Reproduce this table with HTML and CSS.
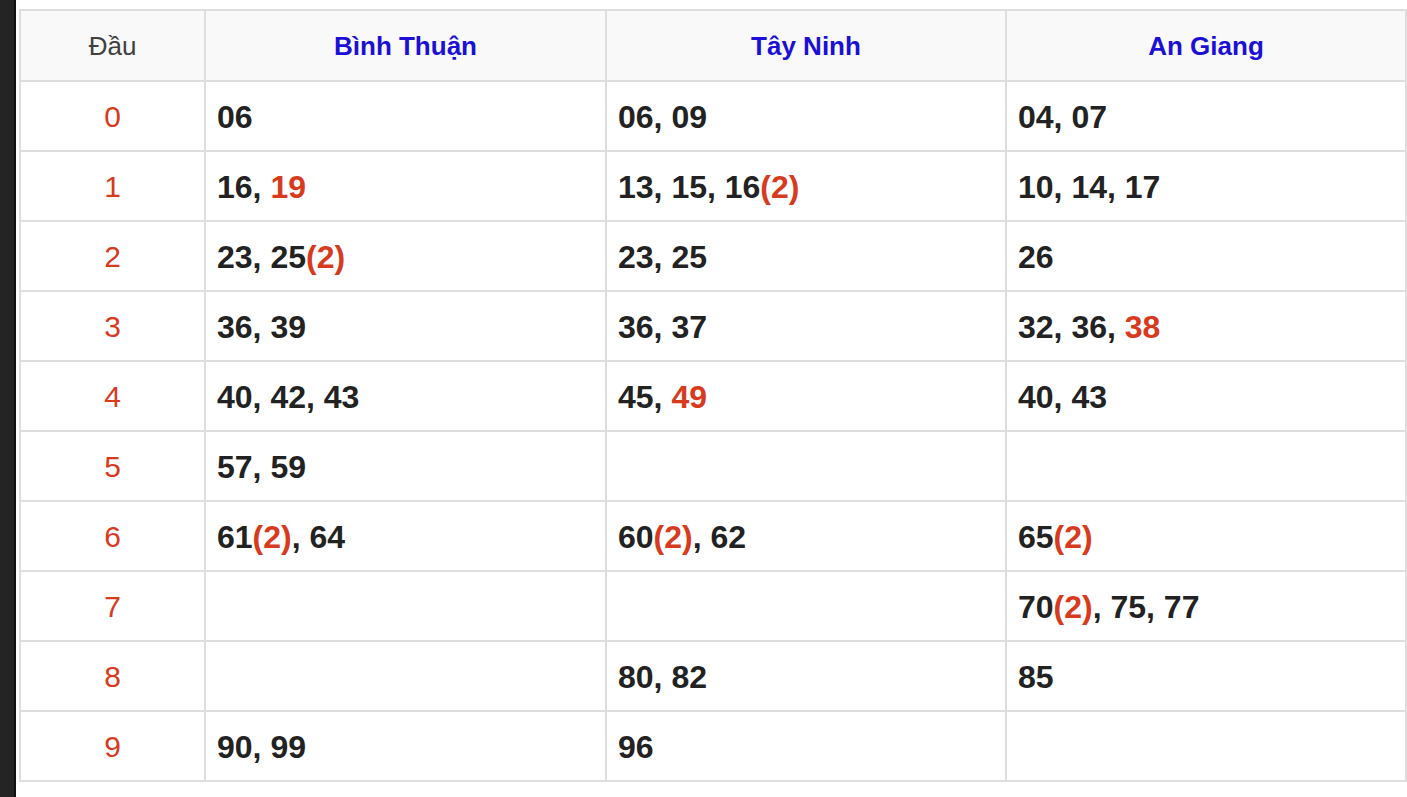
FILE: index.html
```html
<!DOCTYPE html>
<html lang="vi">
<head>
<meta charset="utf-8">
<title>Thống kê đầu</title>
<link rel="stylesheet" href="styles.css">
</head>
<body>
<div class="page">
  <aside class="side"></aside>
  <main class="main">
    <div class="grid">
      <div class="cell head"><span>Đầu</span></div>
      <div class="cell head prov"><span>Bình Thuận</span></div>
      <div class="cell head prov"><span>Tây Ninh</span></div>
      <div class="cell head prov"><span>An Giang</span></div>

      <div class="cell dau"><span>0</span></div>
      <div class="cell num"><span>06</span></div>
      <div class="cell num"><span>06, 09</span></div>
      <div class="cell num"><span>04, 07</span></div>

      <div class="cell dau"><span>1</span></div>
      <div class="cell num"><span>16, <span class="r">19</span></span></div>
      <div class="cell num"><span>13, 15, 16<span class="r">(2)</span></span></div>
      <div class="cell num"><span>10, 14, 17</span></div>

      <div class="cell dau"><span>2</span></div>
      <div class="cell num"><span>23, 25<span class="r">(2)</span></span></div>
      <div class="cell num"><span>23, 25</span></div>
      <div class="cell num"><span>26</span></div>

      <div class="cell dau"><span>3</span></div>
      <div class="cell num"><span>36, 39</span></div>
      <div class="cell num"><span>36, 37</span></div>
      <div class="cell num"><span>32, 36, <span class="r">38</span></span></div>

      <div class="cell dau"><span>4</span></div>
      <div class="cell num"><span>40, 42, 43</span></div>
      <div class="cell num"><span>45, <span class="r">49</span></span></div>
      <div class="cell num"><span>40, 43</span></div>

      <div class="cell dau"><span>5</span></div>
      <div class="cell num"><span>57, 59</span></div>
      <div class="cell num"></div>
      <div class="cell num"></div>

      <div class="cell dau"><span>6</span></div>
      <div class="cell num"><span>61<span class="r">(2)</span>, 64</span></div>
      <div class="cell num"><span>60<span class="r">(2)</span>, 62</span></div>
      <div class="cell num"><span>65<span class="r">(2)</span></span></div>

      <div class="cell dau"><span>7</span></div>
      <div class="cell num"></div>
      <div class="cell num"></div>
      <div class="cell num"><span>70<span class="r">(2)</span>, 75, 77</span></div>

      <div class="cell dau"><span>8</span></div>
      <div class="cell num"></div>
      <div class="cell num"><span>80, 82</span></div>
      <div class="cell num"><span>85</span></div>

      <div class="cell dau"><span>9</span></div>
      <div class="cell num"><span>90, 99</span></div>
      <div class="cell num"><span>96</span></div>
      <div class="cell num"></div>
    </div>
  </main>
</div>
</body>
</html>
```

FILE: styles.css
```css
html, body {
  margin: 0;
  padding: 0;
  background: #fff;
}
body {
  font-family: "Liberation Sans", Arial, Helvetica, sans-serif;
  color: #222;
}
.page {
  display: flex;
  height: 797px;
  overflow: hidden;
}
.side {
  width: 14px;
  flex: 0 0 14px;
  background: #242424;
  border-right: 2px solid #121212;
}
.main {
  flex: 1;
  padding: 9px 0 0 3px;
}
.grid {
  display: grid;
  grid-template-columns: 183px 399px 398px 398px;
  grid-template-rows: 69px repeat(10, 68px);
  gap: 2px;
  padding: 2px;
  background: #dedede;
  width: max-content;
}
.cell {
  background: #fff;
  display: flex;
  align-items: center;
  white-space: pre;
  padding-top: 2px;
  box-sizing: border-box;
}
.head {
  background: #f9f9f9;
  justify-content: center;
  font-size: 26px;
  color: #404040;
}
.prov {
  color: #1c10d6;
  font-weight: bold;
}
.dau {
  justify-content: center;
  font-size: 30px;
  color: #d83a1e;
}
.num {
  padding-left: 11px;
  font-size: 32px;
  font-weight: bold;
  color: #222;
}
.r {
  color: #d83a1e;
}
```
